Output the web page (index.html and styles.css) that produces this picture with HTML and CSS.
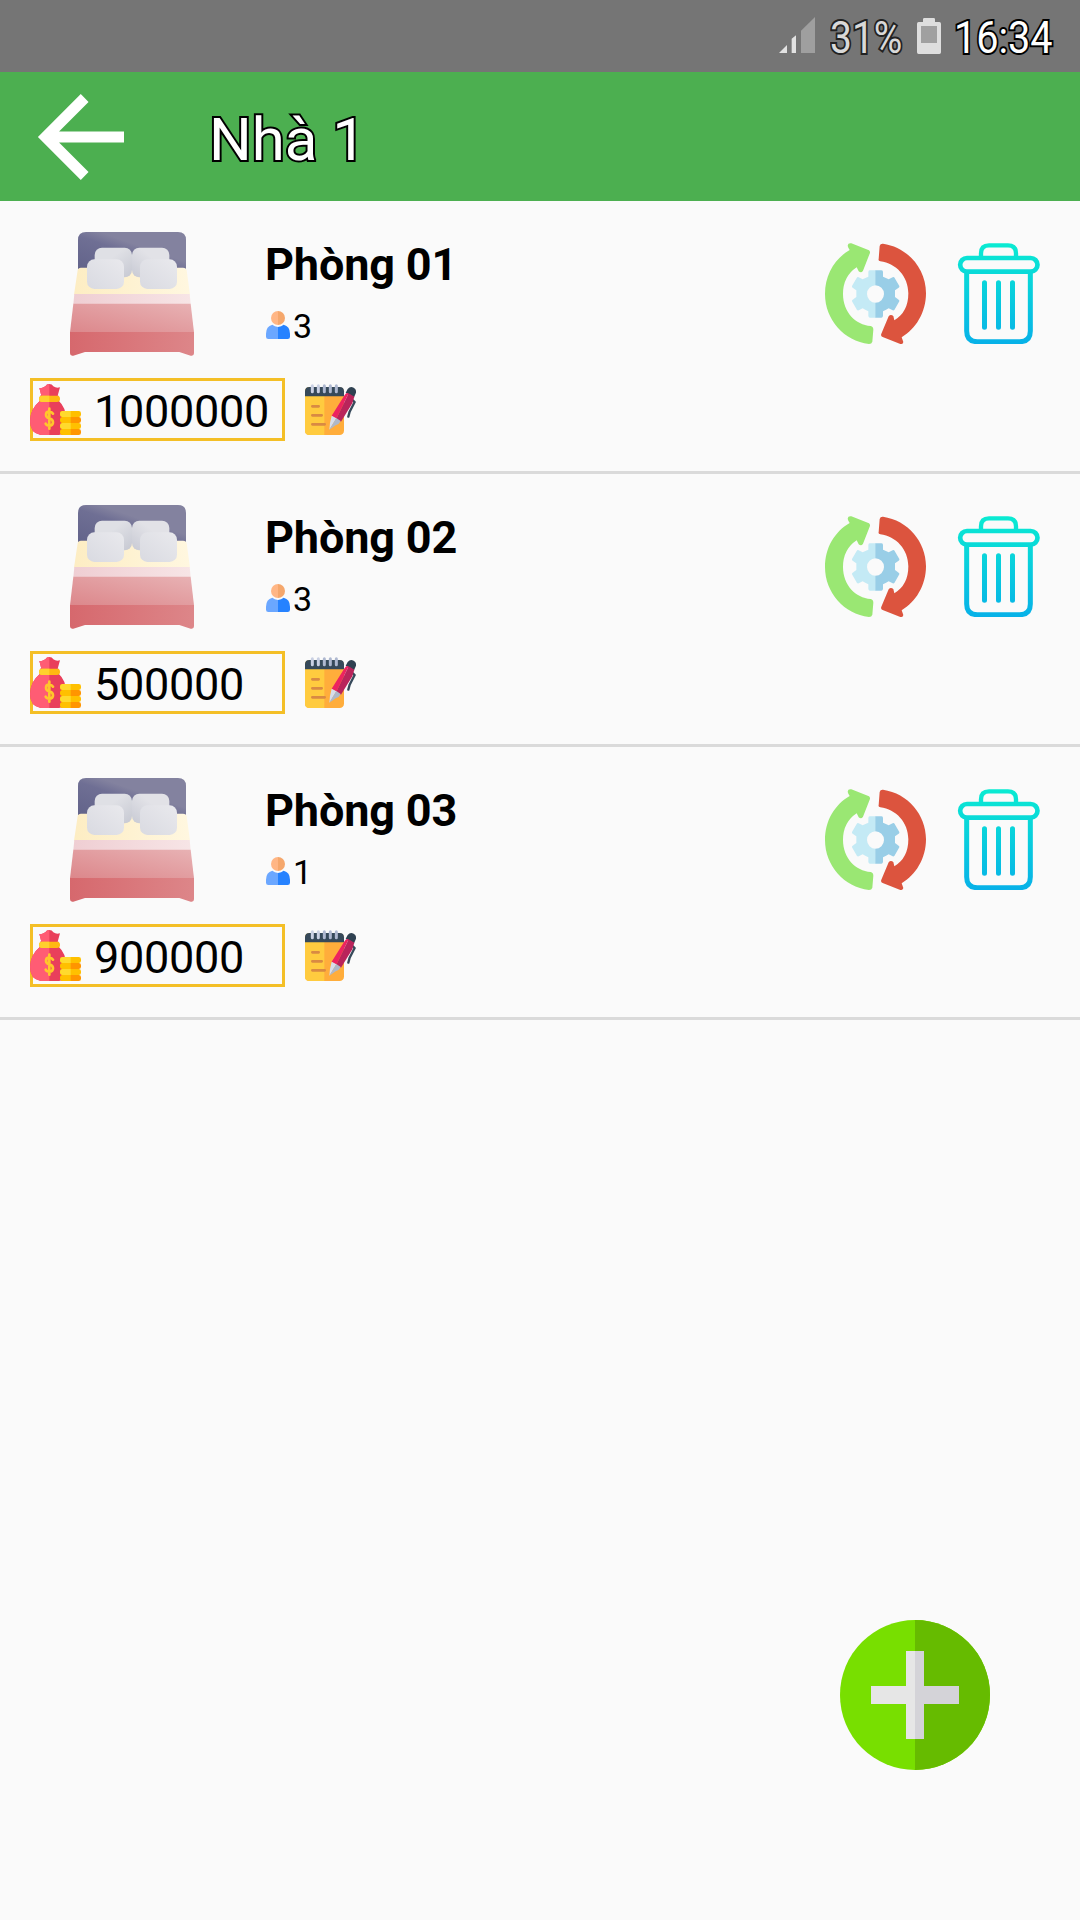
FILE: index.html
```html
<!DOCTYPE html>
<html lang="vi">
<head>
<meta charset="utf-8">
<title>Nhà 1</title>
<link rel="stylesheet" href="styles.css">
</head>
<body>
<svg class="defs" width="0" height="0" aria-hidden="true">
  <defs>
    <linearGradient id="gBoard" x1="0" y1="1" x2="1" y2="0"><stop offset="0" stop-color="#62638a"/><stop offset=".45" stop-color="#6f6f94"/><stop offset=".6" stop-color="#83829f"/><stop offset="1" stop-color="#83829f"/></linearGradient>
    <linearGradient id="gPillow" x1="0" y1="1" x2="1" y2="0"><stop offset="0" stop-color="#d9dae1"/><stop offset="1" stop-color="#e9e9ed"/></linearGradient>
    <linearGradient id="gPillowBack" x1="1" y1="1" x2="0" y2="0"><stop offset="0" stop-color="#c6c8d2"/><stop offset=".6" stop-color="#dfe0e5"/><stop offset="1" stop-color="#dfe0e5"/></linearGradient>
    <linearGradient id="gPillowBack2" x1="0" y1="1" x2="1" y2="0"><stop offset="0" stop-color="#c8cad4"/><stop offset=".6" stop-color="#e2e2e7"/><stop offset="1" stop-color="#e2e2e7"/></linearGradient>
    <linearGradient id="gSheet"><stop offset="0" stop-color="#fdedc3"/><stop offset="1" stop-color="#fff7e0"/></linearGradient>
    <linearGradient id="gFold"><stop offset="0" stop-color="#efced3"/><stop offset="1" stop-color="#f7e5e6"/></linearGradient>
    <linearGradient id="gCover" x1="0" y1="1" x2="1" y2="0"><stop offset="0" stop-color="#dc878b"/><stop offset="1" stop-color="#e8b2b4"/></linearGradient>
    <linearGradient id="gFoot"><stop offset="0" stop-color="#d6686d"/><stop offset="1" stop-color="#dd8689"/></linearGradient>
    <linearGradient id="gTrash" gradientUnits="userSpaceOnUse" x1="0" y1="0" x2="0" y2="303"><stop offset="0" stop-color="#0aebd2"/><stop offset="1" stop-color="#07b1e8"/></linearGradient>
    <clipPath id="bagLeft"><path d="M0 0H58V153H0z"/></clipPath>
  </defs>
  <symbol id="bed" viewBox="0 0 372 372">
    <path fill="url(#gBoard)" d="M24 112V24Q24 0 48 0H324Q348 0 348 24V112z"/>
    <path fill="url(#gSheet)" d="M33 107H339Q349 107 350 115L360 188H12L23 115Q24 107 33 107z"/>
    <rect x="74" y="47" width="112" height="89" rx="22" fill="url(#gPillowBack)"/>
    <rect x="186" y="47" width="112" height="89" rx="22" fill="url(#gPillowBack2)"/>
    <rect x="51" y="82" width="111" height="89" rx="22" fill="url(#gPillow)"/>
    <rect x="210" y="82" width="111" height="89" rx="22" fill="url(#gPillow)"/>
    <path fill="url(#gFold)" d="M13 186H359L362 216H10z"/>
    <path fill="url(#gCover)" d="M10 215H362L372 301H0z"/>
    <path fill="url(#gFoot)" d="M0 300H372V364Q372 373 362 371L328 360H45L10 371Q0 373 0 364z"/>
  </symbol>
  <symbol id="person" viewBox="0 0 72 84">
    <path fill="#ffb685" d="M36 0A21 21 0 0 0 36 42z"/><path fill="#f5a76c" d="M36 0A21 21 0 0 1 36 42z"/>
    <path fill="#6ba7ff" d="M36 48Q26 47 19 41Q0 46 0 68V77Q0 84 7 84H36z"/>
    <path fill="#2682ff" d="M36 48Q46 47 53 41Q72 46 72 68V77Q72 84 65 84H36z"/>
  </symbol>
  <symbol id="sync" viewBox="0 0 303 303">
    <path fill="#9ae773" d="M70 14L68 8Q69-1 79 1L132 22Q137 26 134 32L114 83Q109 91 101 85L95 73Q54 100 54 153C54 207 92 246 137 249Q145 251 145 260L142 296Q140 303 132 303C57 294 0 230 0 153C0 95 29 47 74 21z"/>
    <path fill="#dc543e" d="M161 48L164 9Q166 1 174 2C249 13 303 77 303 151C303 209 272 258 230 283L235 297Q234 304 226 303L173 282Q166 279 169 272L191 220Q197 212 205 219L208 232Q250 207 250 151C250 100 213 61 166 55Q159 54 161 48z"/>
    <path fill="#c4eaf5" d="M152 82H135Q131 82 130 86V101Q121 104 113 109L101 103Q97 101 95 105L81 129Q80 132 83 134L94 142V162L83 170Q80 172 81 175L96 201Q98 203 101 202L113 196Q120 201 130 205V219Q131 224 135 224H152V179A26 26 0 0 1 152 127z"/>
    <path fill="#99cee7" d="M151 82H169Q173 82 174 86V101Q183 104 191 109L203 103Q207 101 209 105L223 129Q224 132 221 134L210 142V162L221 170Q224 172 223 175L208 201Q206 203 203 202L191 196Q184 201 174 205V219Q173 224 169 224H151V179A26 26 0 0 0 151 127z"/>
  </symbol>
  <symbol id="trash" viewBox="0 0 303 303">
    <g fill="none" stroke="url(#gTrash)">
      <path stroke-width="13" d="M99 42V31Q99 7 123 7H180Q204 7 204 31V42"/>
      <rect x="36.500" y="45" width="232" height="41" rx="20.500" stroke-width="14"/>
      <path stroke-width="15" d="M56 84V264Q56 296 88 296H215Q247 296 247 264V84"/>
      <path stroke-width="15" stroke-linecap="round" d="M109.500 119V253M151.500 119V253M193.500 119V253"/>
    </g>
  </symbol>
  <symbol id="money" viewBox="0 0 153 153">
    <path fill="#e93f5b" d="M28 12Q37 14 46 7Q50 0 58 0Q66 0 70 7Q79 14 90 10L83 35H86V50Q108 70 108 105V143Q96 153 79 153H32Q0 147 0 111Q0 75 30 50V35H34z"/>
    <path clip-path="url(#bagLeft)" fill="#ff5c74" d="M28 12Q37 14 46 7Q50 0 58 0L83 42Q108 60 108 105V153H32Q0 147 0 111Q0 75 30 50V35H34z"/>
    <rect x="27" y="35" width="63" height="19" rx="9" fill="#ffb812"/><path fill="#ffd12d" d="M58 35H36Q27 36 27 44Q27 53 36 54H58z"/>
    <path fill="none" stroke="#ffc72b" stroke-width="8" stroke-linecap="round" stroke-linejoin="round" d="M58 74V134M69 89Q65 83 58 83Q48 83 48 92Q48 100 58 103Q69 106 69 115Q69 125 58 125Q50 125 47 119"/>
    <rect x="90" y="81" width="63" height="18" rx="7" fill="#ffc000"/><path fill="#ffda2d" d="M122 81H97Q90 82 90 90Q90 98 97 99H122z"/>
    <rect x="90" y="99" width="63" height="18" rx="7" fill="#ff9500"/><path fill="#ffc000" d="M122 99H97Q90 100 90 108Q90 116 97 117H122z"/>
    <rect x="90" y="117" width="63" height="18" rx="7" fill="#ffc000"/><path fill="#ffda2d" d="M122 117H97Q90 118 90 126Q90 134 97 135H122z"/>
    <rect x="90" y="135" width="63" height="18" rx="7" fill="#ff9500"/><path fill="#ffc000" d="M122 135H97Q90 136 90 144Q90 152 97 153H122z"/>
  </symbol>
  <symbol id="note" viewBox="0 0 153 153">
    <rect y="10" width="117" height="143" rx="13" fill="#ffad3b"/><path fill="#ffcb3f" d="M58 10H13Q0 10 0 23V140Q0 153 13 153H58z"/>
    <path fill="#36495a" d="M0 37V22Q0 9 13 9H104Q117 9 117 22V37z"/>
    <path fill="none" stroke="#c9d0e3" stroke-width="9" stroke-linecap="round" d="M22 5V23M40 5V23"/>
    <path fill="none" stroke="#aeb8d0" stroke-width="9" stroke-linecap="round" d="M58 5V23M76 5V23M94 5V23"/>
    <path fill="none" stroke="#d98a43" stroke-width="8" stroke-linecap="round" d="M22 67H41M22 94H50M22 121H59"/>
    <path fill="none" stroke="#36495a" stroke-width="7" stroke-linecap="round" stroke-linejoin="round" d="M137 43L149 54L134 83L130 98"/>
    <path fill="#2f4151" d="M122 26L128 15Q136 5 146 11Q155 17 153 26L146 42z"/>
    <path fill="#ed2360" d="M80 95L119 33Q124 25 131 28L94 104z"/><path fill="#b9245b" d="M131 28L148 38L142 58L108 113L94 104z"/>
    <path fill="#d7deeb" d="M80 95L94 103L73 137L75 117z"/><path fill="#aeb8c9" d="M94 102L107 111Q103 121 92 124L73 137z"/>
  </symbol>
</svg>

<div class="screen">
  <div class="status">
    <svg class="signal" viewBox="0 0 108 108"><path fill="#e2e2e2" d="M0 108L24 84V108zM38 108V65L51 55V108z"/><path fill="#9f9f9f" d="M66 108V41L108 0V108z"/></svg>
    <span class="battery-text">31%</span>
    <svg class="battery" viewBox="0 0 72 108"><path fill="#dedede" d="M18 12V4Q18 0 22 0H50Q54 0 54 4V12H67Q72 12 72 17V103Q72 108 67 108H5Q0 108 0 103V17Q0 12 5 12z"/><path fill="#a0a0a0" d="M12 24H60V75H12z"/></svg>
    <span class="clock">16:34</span>
  </div>
  <header class="bar">
    <svg class="back" viewBox="0 0 258 258"><path fill="none" stroke="#fff" stroke-width="33" d="M140 12L23 129L140 246M30 129H258"/></svg>
    <h1 class="title">Nhà 1</h1>
  </header>
  <main class="rooms">
    <section class="room">
      <div class="room-main">
        <svg class="bed"><use href="#bed"/></svg>
        <div class="info">
          <h2 class="name">Phòng 01</h2>
          <div class="people"><svg class="person"><use href="#person"/></svg><span>3</span></div>
        </div>
        <svg class="action"><use href="#sync"/></svg>
        <svg class="action"><use href="#trash"/></svg>
      </div>
      <div class="room-price">
        <div class="price"><svg class="small"><use href="#money"/></svg><span>1000000</span></div>
        <svg class="small"><use href="#note"/></svg>
      </div>
    </section>
    <section class="room">
      <div class="room-main">
        <svg class="bed"><use href="#bed"/></svg>
        <div class="info">
          <h2 class="name">Phòng 02</h2>
          <div class="people"><svg class="person"><use href="#person"/></svg><span>3</span></div>
        </div>
        <svg class="action"><use href="#sync"/></svg>
        <svg class="action"><use href="#trash"/></svg>
      </div>
      <div class="room-price">
        <div class="price"><svg class="small"><use href="#money"/></svg><span>500000</span></div>
        <svg class="small"><use href="#note"/></svg>
      </div>
    </section>
    <section class="room">
      <div class="room-main">
        <svg class="bed"><use href="#bed"/></svg>
        <div class="info">
          <h2 class="name">Phòng 03</h2>
          <div class="people"><svg class="person"><use href="#person"/></svg><span>1</span></div>
        </div>
        <svg class="action"><use href="#sync"/></svg>
        <svg class="action"><use href="#trash"/></svg>
      </div>
      <div class="room-price">
        <div class="price"><svg class="small"><use href="#money"/></svg><span>900000</span></div>
        <svg class="small"><use href="#note"/></svg>
      </div>
    </section>
  </main>
  <svg class="fab" viewBox="0 0 450 450"><circle cx="225" cy="225" r="225" fill="#78df00"/><path fill="#66bb00" d="M225 0A225 225 0 0 1 225 450z"/><path fill="#e6e6e6" d="M198 93H225V357H198V252H93V198H198z"/><path fill="#d4d3d8" d="M252 93H225V357H252V252H357V198H252z"/></svg>
</div>
</body>
</html>
```
FILE: styles.css
```css
* { box-sizing: border-box; }
body { margin: 0; background: #fafafa; color: #000; font-family: Roboto, sans-serif; }
.defs { position: absolute; }
svg { display: block; flex: none; overflow: visible; }
.screen { position: relative; width: 1080px; height: 1920px; overflow: hidden; background: #fafafa; }

.status { display: flex; height: 72px; padding: 17px 0 0 779px; background: #757575; font-size: 45px; line-height: 42px; }
.signal { width: 36px; height: 36px; }
.battery { width: 24px; height: 36px; margin-top: 1px; }
.battery-text, .clock { flex: none; white-space: nowrap; transform-origin: 0 50%; -webkit-text-stroke: 4px #222; paint-order: stroke fill; }
.battery-text { width: 87px; margin-left: 15px; color: #d9d9d9; transform: scaleX(.865); }
.clock { margin-left: 13px; color: #fff; -webkit-text-stroke-color: #000; transform: scaleX(.88); }

.bar { display: flex; align-items: center; height: 129px; padding-left: 38px; background: #4caf50; }
.back { width: 86px; height: 86px; }
.title { margin: 6px 0 0 85px; color: #fff; font-size: 60px; font-weight: 400; line-height: 70px; -webkit-text-stroke: 4px #000; paint-order: stroke fill; }

.room { height: 273px; padding-top: 31px; border-bottom: 3px solid #dadada; }
.room-main { display: flex; height: 124px; padding: 0 31px 0 70px; }
.bed { width: 124px; height: 124px; }
.info { flex: 1; margin-left: 71px; padding-top: 6px; }
.name { margin: 0; font-size: 45px; font-weight: 700; line-height: 53px; letter-spacing: -.15px; }
.people { display: flex; margin-top: 15px; font-size: 34px; line-height: 40px; }
.person { width: 24px; height: 28px; margin: 5px 3px 0 1px; }
.action { width: 101px; height: 101px; margin: 11px 0 0 22px; }
.room-price { display: flex; gap: 20px; padding: 22px 0 0 30px; }
.price { display: flex; width: 255px; height: 63px; border: 3px solid #f4bf26; font-size: 45px; line-height: 61px; letter-spacing: -.3px; }
.price .small { margin: 3px 13px 0 -3px; }
.small { width: 51px; height: 51px; margin-top: 6px; }

.fab { position: absolute; right: 90px; bottom: 150px; width: 150px; height: 150px; }
```
